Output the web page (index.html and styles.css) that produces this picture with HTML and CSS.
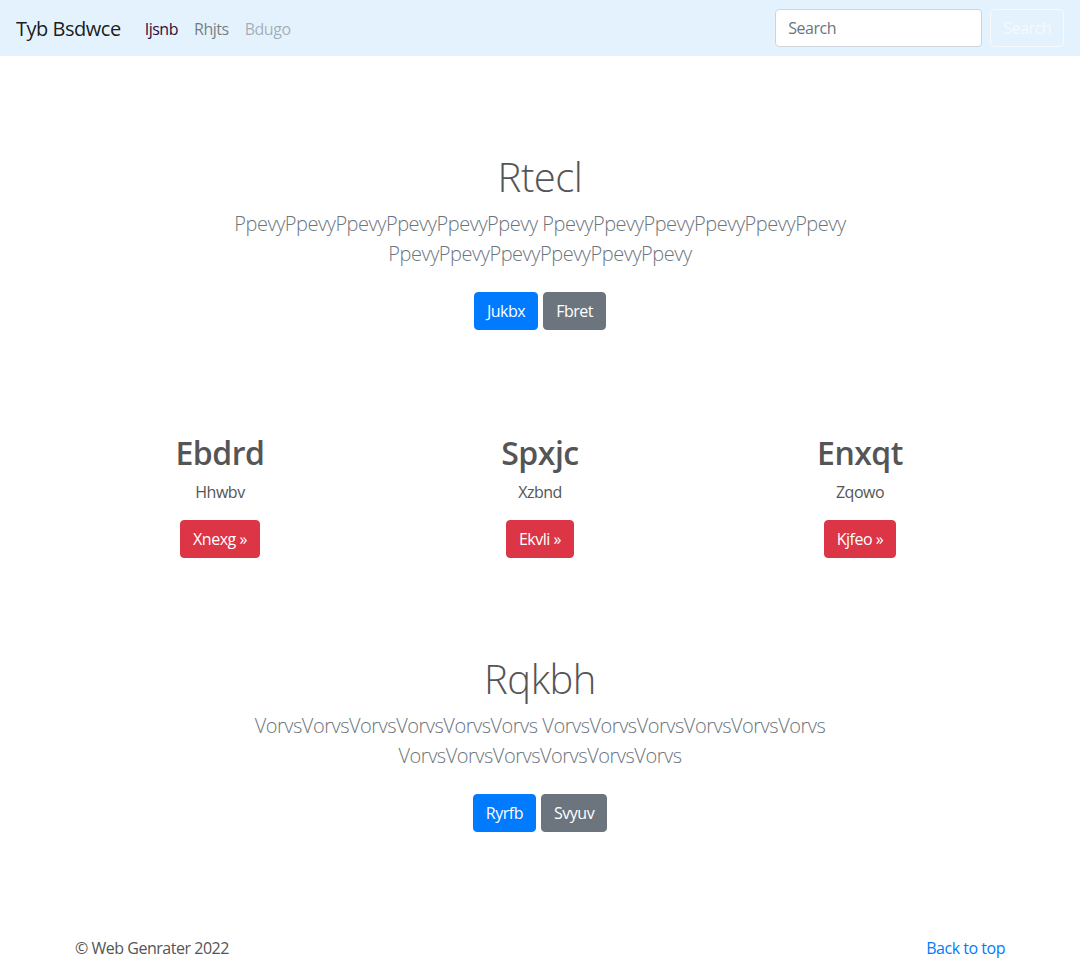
FILE: index.html
```html
<!DOCTYPE html>
<html lang="en">
<head>
<meta charset="utf-8">
<title>Tyb Bsdwce</title>
<link rel="stylesheet" href="styles.css">
</head>
<body>
<nav class="navbar">
  <a class="brand" href="#">Tyb Bsdwce</a>
  <ul class="nav">
    <li><a class="nav-link active" href="#">Ijsnb</a></li>
    <li><a class="nav-link" href="#">Rhjts</a></li>
    <li><a class="nav-link disabled" href="#">Bdugo</a></li>
  </ul>
  <form class="search">
    <input class="search-input" type="search" placeholder="Search">
    <button class="btn btn-outline-light" type="button">Search</button>
  </form>
</nav>

<main>
  <section class="hero hero-first">
    <h1 class="hero-title">Rtecl</h1>
    <p class="lead">PpevyPpevyPpevyPpevyPpevyPpevy PpevyPpevyPpevyPpevyPpevyPpevy PpevyPpevyPpevyPpevyPpevyPpevy</p>
    <div class="hero-actions">
      <a class="btn btn-primary" href="#">Jukbx</a>
      <a class="btn btn-secondary" href="#">Fbret</a>
    </div>
  </section>

  <section class="features">
    <div class="feature">
      <h2>Ebdrd</h2>
      <p>Hhwbv</p>
      <a class="btn btn-danger" href="#">Xnexg &raquo;</a>
    </div>
    <div class="feature">
      <h2>Spxjc</h2>
      <p>Xzbnd</p>
      <a class="btn btn-danger" href="#">Ekvli &raquo;</a>
    </div>
    <div class="feature">
      <h2>Enxqt</h2>
      <p>Zqowo</p>
      <a class="btn btn-danger" href="#">Kjfeo &raquo;</a>
    </div>
  </section>

  <section class="hero hero-second">
    <h1 class="hero-title">Rqkbh</h1>
    <p class="lead">VorvsVorvsVorvsVorvsVorvsVorvs VorvsVorvsVorvsVorvsVorvsVorvs VorvsVorvsVorvsVorvsVorvsVorvs</p>
    <div class="hero-actions">
      <a class="btn btn-primary" href="#">Ryrfb</a>
      <a class="btn btn-secondary" href="#">Svyuv</a>
    </div>
  </section>
</main>

<footer class="footer">
  <p class="copyright">&copy; Web Genrater 2022</p>
  <a class="back-top" href="#">Back to top</a>
</footer>
</body>
</html>
```

FILE: styles.css
```css
* { box-sizing: border-box; }

html, body {
  margin: 0;
  padding: 0;
}

body {
  font-family: "Open Sans", "Noto Sans", "Liberation Sans", sans-serif;
  font-size: 16px;
  line-height: 1.5;
  letter-spacing: -0.03em;
  color: #555555;
  background: #ffffff;
}

a { text-decoration: none; }

/* Navbar */
.navbar {
  height: 56px;
  background: #e3f2fd;
  display: flex;
  align-items: center;
  padding: 1px 16px 0;
}

.brand {
  font-size: 20px;
  line-height: 30px;
  color: rgba(0, 0, 0, 0.9);
  margin-right: 16px;
}

.nav {
  list-style: none;
  margin: 0;
  padding: 0;
  display: flex;
  flex: 1;
}

.nav-link {
  display: block;
  padding: 8px 8px;
  line-height: 24px;
  color: rgba(0, 0, 0, 0.5);
}

.nav-link.active { color: #2e0c40; }
.nav-link.disabled { color: rgba(0, 0, 0, 0.3); }

.search {
  display: flex;
  align-items: center;
  margin-top: -1px;
}

.search-input {
  width: 207px;
  height: 38px;
  padding: 6px 12px;
  font-family: inherit;
  font-size: 16px;
  letter-spacing: -0.03em;
  color: #495057;
  background: #ffffff;
  border: 1px solid #ced4da;
  border-radius: 4px;
  margin-right: 8px;
  outline: none;
}

.search-input::placeholder { color: #6c757d; }

/* Buttons */
.btn {
  display: inline-block;
  font-family: inherit;
  font-size: 16px;
  letter-spacing: -0.03em;
  line-height: 24px;
  padding: 6px 12px;
  border: 1px solid transparent;
  border-radius: 4px;
  color: #ffffff;
  background: transparent;
  cursor: pointer;
}

.btn-outline-light {
  color: #f8f9fa;
  border-color: #f8f9fa;
}

.btn-primary { background: #007bff; border-color: #007bff; }
.btn-secondary { background: #6c757d; border-color: #6c757d; }
.btn-danger { background: #dc3545; border-color: #dc3545; }

/* Hero */
.hero {
  text-align: center;
  display: flex;
  flex-direction: column;
  align-items: center;
}

.hero-first { padding: 97px 0 95px; }
.hero-second { padding: 81px 0 47px; }

.hero-title {
  margin: 0 0 8px;
  font-size: 40px;
  line-height: 1.2;
  font-weight: 300;
  color: #555555;
}

.lead {
  margin: 0 0 16px;
  max-width: 660px;
  font-size: 20px;
  line-height: 30px;
  font-weight: 300;
  color: #6c757d;
}

.hero-actions {
  display: flex;
  justify-content: center;
  gap: 5px;
  padding: 8px 0;
  margin-top: -1px;
}

/* Features */
.features {
  width: 960px;
  margin: 0 auto;
  display: grid;
  grid-template-columns: repeat(3, 1fr);
}

.feature {
  padding: 0 15px;
  text-align: center;
}

.feature h2 {
  margin: 1px 0 8px;
  font-size: 32px;
  line-height: 1.2;
  font-weight: 600;
  color: #555555;
}

.feature p {
  margin: 0 0 16px;
}

.feature .btn { margin-bottom: 16px; vertical-align: top; }

/* Footer */
.footer {
  width: 960px;
  margin: 0 auto;
  padding: 49px 15px 0;
  display: flex;
  justify-content: space-between;
  line-height: 24px;
}

.copyright {
  margin: 0;
  color: #555555;
}

.back-top { color: #007bff; }
```
